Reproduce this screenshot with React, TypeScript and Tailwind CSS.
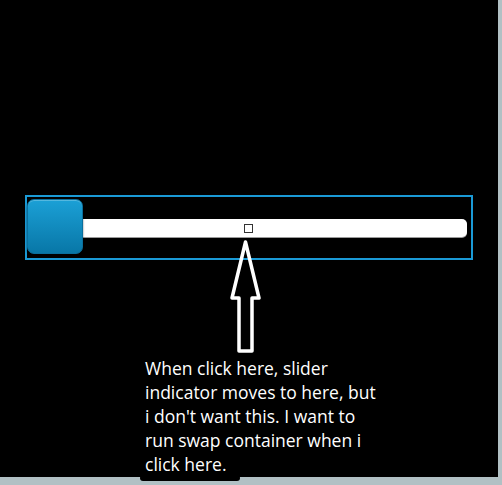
const lines = [
  "When click here, slider",
  "indicator moves to here, but",
  "i don't want this. I want to",
  "run swap container when i",
  "click here.",
];

const UpArrow = () => (
  <svg width="40" height="116" viewBox="0 0 40 116" className="absolute left-[225px] top-[240px]">
    <path
      d="M20.5 2 L34 58 L27 58 L27 111 L14 111 L14 58 L7 58 Z"
      fill="none"
      stroke="#ffffff"
      strokeWidth="3.5"
      strokeLinejoin="round"
    />
  </svg>
);

const App = () => {
  return (
    <div className="w-[502px] h-[485px] bg-[#b1c0c4] overflow-hidden">
      <div className="relative w-[498px] h-[477px] bg-black">
        <div className="pt-[195px] pl-[25px]">
          <div className="w-[448px] h-[65px] border-2 border-[#1a9ad6] flex items-center pr-[4px]">
            <div className="relative flex-1 h-[18px] bg-white rounded-r-[5px] shadow-[0_1px_0_#9a9a9a]">
              <div className="absolute left-[217px] top-[5px] w-[9px] h-[9px] border border-[#333333] bg-white" />
              <div className="absolute left-0 top-[-20px] w-[56px] h-[55px] rounded-[7px] bg-gradient-to-b from-[#1ba0d6] to-[#0877a7] border border-[#0a6f9c] shadow-[0_2px_2px_rgba(0,0,0,0.6),inset_0_1px_0_rgba(255,255,255,0.25)]" />
            </div>
          </div>
        </div>
        <UpArrow />
        <div
          className="mt-[96px] ml-[145px] text-white text-[17.5px] leading-[24px]"
          style={{ fontFamily: '"Open Sans", "Noto Sans", sans-serif' }}
        >
          {lines.map((l) => (
            <div key={l}>{l}</div>
          ))}
        </div>
        <div className="absolute left-[140px] bottom-[-4px] w-[100px] h-[6px] rounded-full bg-black" />
      </div>
    </div>
  );
};

export default App;
